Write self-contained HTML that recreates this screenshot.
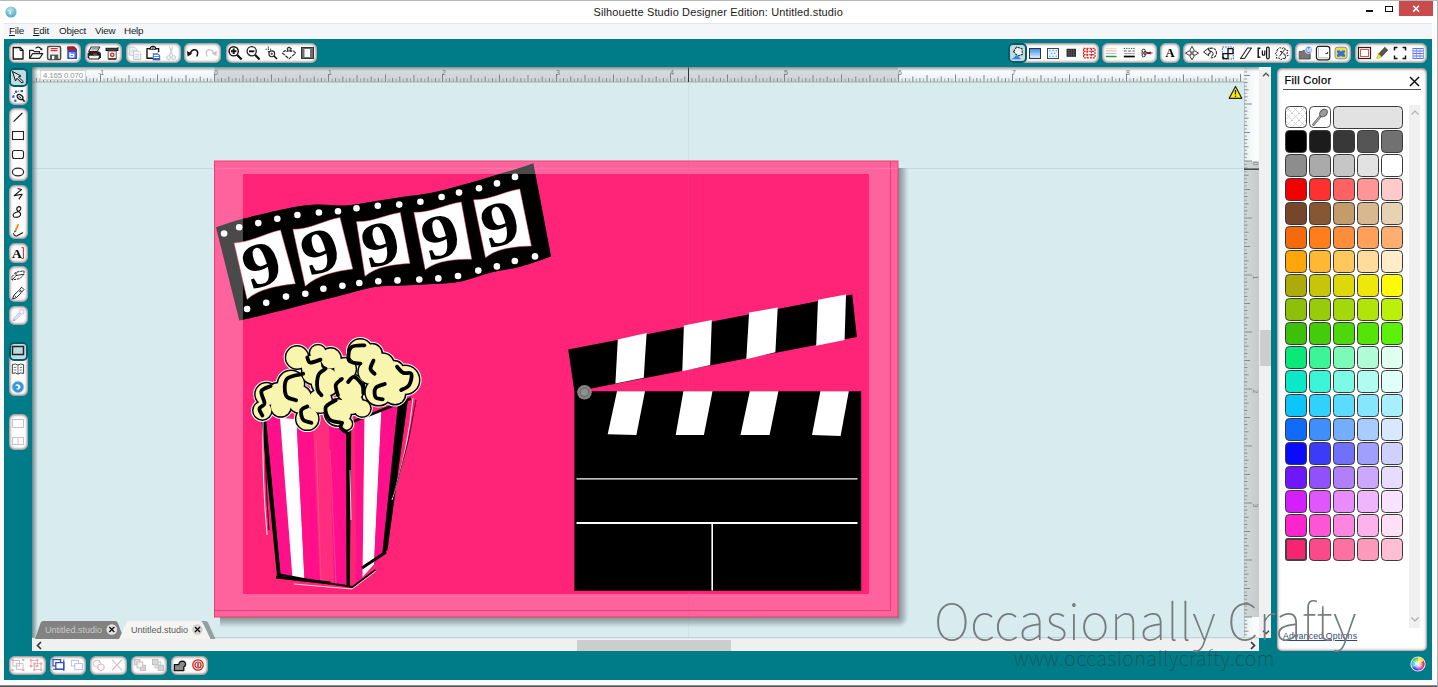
<!DOCTYPE html>
<html lang="en"><head><meta charset="utf-8"><title>Silhouette Studio Designer Edition: Untitled.studio</title>
<style>
*{box-sizing:border-box;margin:0;padding:0}
html,body{width:1438px;height:687px;overflow:hidden;background:#fbfbfb;font-family:"Liberation Sans",sans-serif}
#win{position:relative;width:1438px;height:687px;background:#fbfbfb;overflow:hidden}
#topline{left:0;top:0;width:1438px;height:1px;background:#b9b9b9;z-index:6}
#win::after{content:"";position:absolute;left:0;right:0;top:685px;height:2px;background:linear-gradient(#a8a8a8,#3a3a3a)}
#win::before{content:"";position:absolute;right:0;top:0;width:1px;height:687px;background:#b0b0b0;z-index:5}
#win>*,#app>*{position:absolute}
#app{position:static !important}
#titlebar{left:0;top:1px;width:1437px;height:22px;background:#fff}
#titlebar>*{position:absolute}
#appicon{left:4px;top:3.500px}
#title{left:593.500px;top:5px;font-size:11px;color:#1a1a1a;white-space:nowrap;letter-spacing:.13px}
#wmin{left:1366px;top:9px;width:7px;height:2px;background:#111}
#wmax{left:1385px;top:5px;width:8px;height:6px;border:1.300px solid #111}
#wclose{left:1399px;top:0px;width:34px;height:15px;background:#c94c4d}
#menubar{left:4px;top:23px;width:1428px;height:16px;background:#f4f6f7;border-top:1px solid #e3e5e6;font-size:9.800px;letter-spacing:-.2px;color:#1a1a1a}
#menubar span{position:absolute;top:1px;margin-left:-4px;white-space:nowrap}
#appbg{left:4px;top:39px;width:1428px;height:641px;background:#007b88}
.grp{background:#fff;border-radius:6px;box-shadow:inset 0 0 2.500px 1.200px rgba(70,45,45,.6)}
.grp svg{position:absolute;overflow:visible}
.sel{position:absolute;border:2px solid #085a67;border-radius:5px;background:#bcdde2}
#canvas{left:32px;top:67px;width:1227px;height:572px;background:#d8ecef;overflow:hidden}
#canvas>*{position:absolute}
#vscroll{left:1259px;top:67px;width:12px;height:571px;background:#f0f0f0}
#vscroll .thumb{position:absolute;left:1px;top:263px;width:11px;height:36px;background:#cdcdcd}
#hscroll{left:32px;top:639px;width:1227px;height:12px;background:#f0f0f0}
#hscroll .thumb{position:absolute;left:545px;top:1px;width:154px;height:11px;background:#cdcdcd}
.ch{position:absolute}
#tabs{left:35px;top:620px;width:200px;height:19px}
#tabs text{font-family:"Liberation Sans",sans-serif}
#wheel{left:1410px;top:656px}
#wm1{left:934px;top:588px;font-family:"Noto Sans CJK SC","DejaVu Sans","Liberation Sans",sans-serif;font-weight:100;font-size:50px;color:#757d7f;white-space:nowrap;line-height:60px;letter-spacing:.3px}
#wm2{left:1014px;top:645px;font-family:"Noto Sans CJK SC","DejaVu Sans","Liberation Sans",sans-serif;font-weight:100;font-size:19.500px;color:#1d4f57;white-space:nowrap;line-height:26px;letter-spacing:.7px}
#panel{left:1277px;top:68px;width:150px;height:583px;background:#fff;border-radius:5px;box-shadow:inset 0 0 2.500px 1px rgba(90,55,55,.55),inset 0 2px 3px -1px rgba(70,70,70,.35)}
#panel>*{position:absolute}
#ptitle{left:7.500px;top:6px;font-size:11px;color:#000;white-space:nowrap;letter-spacing:.35px;-webkit-text-stroke:.25px #000}
#pclose{left:132px;top:8px}
#pline{left:6px;top:21px;width:138px;height:1px;background:#555}
.sw{width:22px;height:23px;border:1px solid #3a3a3a;border-radius:4.500px}
#pscroll{left:132px;top:37px;width:11px;height:523px;background:#f0f0f0}
#advopt{left:6px;top:563px;letter-spacing:.2px;font-size:8.700px;color:#2a4a7a;text-decoration:underline;white-space:nowrap}

</style></head>
<body>
<div id="win">
<div id="topline"></div>
<div id="titlebar">
<svg id="appicon" width="14" height="14" viewBox="0 0 14 14"><defs><radialGradient id="ag" cx="45%" cy="30%" r="75%"><stop offset="0" stop-color="#b4e2ea"/><stop offset="1" stop-color="#48a6c0"/></radialGradient></defs><circle cx="7" cy="7" r="5.600" fill="url(#ag)"/><path d="M2.600 5.200q1.800-.8 3.400.6 1.600 1.600 1.200 3.400-1.400.4-2.400-.6 1.400-.2 1.200-1.400-.6-1.400-3.400-2z" fill="#fff" opacity=".92"/></svg>
<div id="title">Silhouette Studio Designer Edition: Untitled.studio</div>
<div id="wmin"></div><div id="wmax"></div><div id="wclose"><svg width="34" height="15" viewBox="0 0 34 15"><path d="M14.200 4.800l5.800 5.800M20 4.800l-5.800 5.800" stroke="#fff" stroke-width="1.500"/></svg></div>
</div>
<div id="menubar"><span style="left:9px"><u>F</u>ile</span><span style="left:33px"><u>E</u>dit</span><span style="left:59px">Object</span><span style="left:95px">View</span><span style="left:124px">Help</span></div>
<div id="appbg"></div><div id="app">
<div class="grp" style="left:9px;top:43px;width:72px;height:20px"><svg style="left:0px;top:1px" width="18" height="18" viewBox="0 0 18 18"><path d="M4.200 3.500h7l2.800 2.800v8.700h-9.800z" fill="#fff" stroke="#111" stroke-width="1.300" stroke-linejoin="round"/><path d="M11 3.500v3h3" fill="none" stroke="#111" stroke-width="1"/></svg><svg style="left:18px;top:1px" width="18" height="18" viewBox="0 0 18 18"><path d="M2.600 14.300V6.400h3.600l1.200 1.300h5.200v2" fill="none" stroke="#222" stroke-width="1.200" stroke-linejoin="round"/><path d="M2.600 14.300l3-4.600h10.200l-3.300 4.600z" fill="#fff" stroke="#222" stroke-width="1.200" stroke-linejoin="round"/><path d="M8.500 4.300q3-2.600 5.800.6" fill="none" stroke="#222" stroke-width="1.100"/><path d="M15.600 6.300l-2.900-.4 2.400-2z" fill="#222"/></svg><svg style="left:36px;top:1px" width="18" height="18" viewBox="0 0 18 18"><rect x="2.600" y="2.600" width="13" height="13" rx="1.300" fill="#f2f2f2" stroke="#4a4a4a" stroke-width="1.500"/><rect x="5.400" y="3.200" width="7.400" height="5" fill="#fff"/><path d="M5.600 4.600h7M5.600 6.600h7" stroke="#e03030" stroke-width="1.200"/><rect x="5" y="10.600" width="8.200" height="4.600" fill="#555"/><rect x="7" y="11.800" width="2.300" height="3.400" fill="#fff"/></svg><svg style="left:54px;top:1px" width="18" height="18" viewBox="0 0 18 18"><path d="M4.300 2.600h7l2.700 2.700v9.700h-9.700z" fill="#2a48c8"/><path d="M4.300 2.600h7l2.300 2.300h-9.300z" fill="#b01818"/><path d="M4.300 5h9.700v1.200h-9.700z" fill="#c02020"/><rect x="5.600" y="8" width="7" height="5.600" fill="#5a86e8"/><path d="M7 8.600v4.200h3.600v-2.400h-3.600" fill="none" stroke="#fff" stroke-width="1.300"/></svg></div>
<div class="grp" style="left:85px;top:43px;width:37px;height:20px"><svg style="left:0px;top:1px" width="18" height="18" viewBox="0 0 18 18"><path d="M6.200 3h8.600l-2.600 4.600h-8.400z" fill="#fff" stroke="#333" stroke-width="1.100" stroke-linejoin="round"/><path d="M6.800 4.600h6.600M5.900 6h6.600" stroke="#777" stroke-width=".8"/><path d="M2.600 9.600l2-2h9.800l1.600 2v3.600l-2.200 2.400h-9.400l-1.800-2z" fill="#222"/><path d="M3.800 11.700h10.600l-1.400 2.700h-8.400z" fill="#f4f4f4"/><path d="M8 10.200h3.800" stroke="#d02020" stroke-width="1.400"/><path d="M9 11.600l3.400-.4" stroke="#20a040" stroke-width="1.100"/></svg><svg style="left:18px;top:1px" width="18" height="18" viewBox="0 0 18 18"><path d="M2.600 3.800h12.800v3.200h-12.800z" fill="#111"/><path d="M3.600 5.200h10.800" stroke="#777" stroke-width=".8"/><path d="M13.600 3.800l2-1v2z" fill="#2a9a4a"/><path d="M5.200 7h8v8h-8z" fill="#fff" stroke="#555" stroke-width="1"/><circle cx="9.300" cy="10.800" r="1.700" fill="none" stroke="#e02020" stroke-width="1.300"/><path d="M5.200 15h8" stroke="#222" stroke-width="1.400"/></svg></div>
<div class="grp" style="left:126px;top:43px;width:55px;height:20px"><svg style="left:0px;top:1px" width="18" height="18" viewBox="0 0 18 18"><path d="M3.600 3.200h5l2 2v6h-7z" fill="#f4f6fa" stroke="#c3cad8" stroke-width="1"/><path d="M5 6h4M5 8h4" stroke="#cfd5e0" stroke-width=".9"/><path d="M7.600 7h5l2.200 2.200v6.200h-7.200z" fill="#fafbfd" stroke="#bcc4d4" stroke-width="1"/><path d="M9 10.400h4.400M9 12.200h4.400M9 14h4.400" stroke="#c8cfdc" stroke-width=".9"/></svg><svg style="left:18px;top:1px" width="18" height="18" viewBox="0 0 18 18"><path d="M6.200 4.600h-3.200v9.600h6" fill="none" stroke="#111" stroke-width="1.400" stroke-linejoin="round"/><path d="M11.600 4.600h3v3.600" fill="none" stroke="#111" stroke-width="1.400"/><path d="M6 5.200q0-2.800 2.900-2.800t2.900 2.800z" fill="#fff" stroke="#111" stroke-width="1.100"/><circle cx="8.900" cy="4" r=".7" fill="#111"/><path d="M8.800 9.200h5l2.400 2.200v4.400h-7.400z" fill="#3d6cc8"/><path d="M9.800 11.400h4.800M9.800 13.400h5.400" stroke="#fff" stroke-width="1.100"/><path d="M8.800 15.800h7.400" stroke="#274a9a" stroke-width="1"/></svg><svg style="left:36px;top:1px" width="18" height="18" viewBox="0 0 18 18"><path d="M7.400 2.600l3.400 9.400M10.800 2.600l-3.400 9.400" stroke="#c5cad6" stroke-width="1.100" fill="none"/><circle cx="6.600" cy="13.600" r="1.900" fill="none" stroke="#c2c8d6" stroke-width="1.100"/><circle cx="11.600" cy="13.600" r="1.900" fill="none" stroke="#c2c8d6" stroke-width="1.100"/></svg></div>
<div class="grp" style="left:184px;top:43px;width:37px;height:20px"><svg style="left:0px;top:1px" width="18" height="18" viewBox="0 0 18 18"><path d="M6.200 9.400q2-4.800 5.800-3.400 2.800 1.600 1 6" fill="none" stroke="#111" stroke-width="1.500" stroke-linecap="round"/><path d="M3 7l.6 5.400 4.600-2.600z" fill="#111"/></svg><svg style="left:18px;top:1px" width="18" height="18" viewBox="0 0 18 18"><path d="M11.800 9.400q-2-4.800-5.800-3.400-2.800 1.600-1 6" fill="none" stroke="#c9c9c9" stroke-width="1.500" stroke-linecap="round" stroke-dasharray="3 1.200"/><path d="M15 6.600l-.6 5.600-4.600-2.800z" fill="#c6c6c6"/></svg></div>
<div class="grp" style="left:226px;top:43px;width:91px;height:20px"><svg style="left:0px;top:1px" width="18" height="18" viewBox="0 0 18 18"><circle cx="7.700" cy="7.300" r="4.600" fill="#fff" stroke="#111" stroke-width="1.400"/><path d="M5 7.300h5.400M7.700 4.600v5.400" stroke="#111" stroke-width="1.900"/><path d="M11 10.800l4.600 4.800" stroke="#111" stroke-width="2.200"/></svg><svg style="left:18px;top:1px" width="18" height="18" viewBox="0 0 18 18"><circle cx="7.700" cy="7.300" r="4.600" fill="#fff" stroke="#222" stroke-width="1.300"/><path d="M5 7.300h5.400" stroke="#111" stroke-width="1.900"/><path d="M11 10.800l4.600 4.800" stroke="#111" stroke-width="2.200"/></svg><svg style="left:36px;top:1px" width="18" height="18" viewBox="0 0 18 18"><path d="M3.600 5.200h6M6.400 2.600v5.600" stroke="#222" stroke-width="1" stroke-dasharray="1.200 1"/><circle cx="9.800" cy="9.800" r="2.900" fill="#fff" stroke="#222" stroke-width="1.100"/><path d="M8.600 9.800h2.400M9.800 8.600v2.400" stroke="#222" stroke-width=".8"/><path d="M12 12l3 3" stroke="#111" stroke-width="1.600"/></svg><svg style="left:54px;top:1px" width="18" height="18" viewBox="0 0 18 18"><path d="M9 3.200l2.400 1.600-1.200.2.200 1.800h3l2.200 2.300-6.600 5.700-6.600-5.700 2.200-2.300h3l.2-1.800-1.200-.2z" fill="#fff" stroke="#222" stroke-width="1.100" stroke-linejoin="round" stroke-dasharray="3.500 .9"/><path d="M6.400 7.600q2.600-1.600 5.200 0" fill="none" stroke="#222" stroke-width="1"/></svg><svg style="left:72px;top:1px" width="18" height="18" viewBox="0 0 18 18"><rect x="3.500" y="3.500" width="12" height="11" fill="#6f6f6f" stroke="#333" stroke-width="1"/><rect x="6.500" y="5" width="5.500" height="8" fill="#fff"/></svg></div>
<div class="grp" style="left:1008px;top:43px;width:91px;height:20px"><div class="sel" style="left:-0.5px;top:0;width:19px;height:20px"></div><svg style="left:0px;top:1px" width="18" height="18" viewBox="0 0 18 18"><path d="M5.500 6.500l4.500-3.500 4.500 3.500-1.500 5.500h-5z" fill="#e8f2f6" stroke="#222" stroke-width="1" stroke-dasharray="2.500 .8" transform="rotate(-20 9 7)"/><path d="M3 15.200q3-.4 4.600-3.600l3.200.6q.4 2 2.600 3z" fill="#3b82e8"/></svg><svg style="left:18px;top:1px" width="18" height="18" viewBox="0 0 18 18"><defs><linearGradient id="gd" x1="0" x2="0" y1="0" y2="1"><stop offset="0" stop-color="#2f8ff5"/><stop offset="1" stop-color="#eaf4ff"/></linearGradient></defs><rect x="3.500" y="4.500" width="11" height="10" fill="url(#gd)" stroke="#333" stroke-width="1"/></svg><svg style="left:36px;top:1px" width="18" height="18" viewBox="0 0 18 18"><rect x="3.500" y="4.500" width="11" height="10" fill="#eef8ff" stroke="#444" stroke-width="1"/><g fill="#4aa8e8"><circle cx="5.800" cy="6.600" r=".8"/><circle cx="9" cy="6.600" r=".8"/><circle cx="12.200" cy="6.600" r=".8"/><circle cx="7.400" cy="9.400" r=".8"/><circle cx="10.600" cy="9.400" r=".8"/><circle cx="5.800" cy="12.200" r=".8"/><circle cx="9" cy="12.200" r=".8"/><circle cx="12.200" cy="12.200" r=".8"/></g></svg><svg style="left:54px;top:1px" width="18" height="18" viewBox="0 0 18 18"><rect x="4.600" y="4.800" width="9.400" height="8" fill="#222"/><path d="M4.600 6.800h9.400M4.600 8.800h9.400M4.600 10.800h9.400M6.900 4.800v8M9.300 4.800v8M11.700 4.800v8" stroke="#777" stroke-width=".5"/></svg><svg style="left:72px;top:1px" width="18" height="18" viewBox="0 0 18 18"><rect x="3.600" y="4.400" width="11.400" height="9.400" fill="#fff" stroke="#e02020" stroke-width="1.200" stroke-dasharray="2 1"/><path d="M3.600 7.400h11.400M3.600 10.600h11.400M7.200 4.400v9.400M11.400 4.400v9.400" stroke="#e02020" stroke-width="1.300" stroke-dasharray="2 .8"/><rect x="7.800" y="7.800" width="3" height="2.400" fill="#fff"/></svg></div>
<div class="grp" style="left:1102px;top:43px;width:55px;height:20px"><svg style="left:0px;top:1px" width="18" height="18" viewBox="0 0 18 18"><path d="M3.800 4.400h10.800" stroke="#f5d9a0" stroke-width="1"/><path d="M3.800 6.900h10.800" stroke="#f0a8a8" stroke-width="1"/><path d="M3.800 9.400h10.800" stroke="#a8b4f0" stroke-width="1"/><path d="M3.800 12.500h10.800" stroke="#1f9f1f" stroke-width="1.500"/></svg><svg style="left:18px;top:1px" width="18" height="18" viewBox="0 0 18 18"><path d="M3.800 4.400h11" stroke="#333" stroke-width="1" stroke-dasharray="1.200 1.200"/><path d="M3.800 7h11" stroke="#555" stroke-width="1" stroke-dasharray="3 1.400"/><path d="M3.800 9.600h11" stroke="#999" stroke-width="1"/><path d="M3.800 12.500h11" stroke="#000" stroke-width="1.700"/></svg><svg style="left:36px;top:1px" width="18" height="18" viewBox="0 0 18 18"><path d="M2.800 9h13" stroke="#e01010" stroke-width="1.100" stroke-dasharray="2 1.300"/><circle cx="5.600" cy="6.800" r="1.600" fill="none" stroke="#222" stroke-width="1"/><circle cx="5.600" cy="11.200" r="1.600" fill="none" stroke="#222" stroke-width="1"/><path d="M6.800 7.600l6 2.400M6.800 10.400l6-2.400" stroke="#222" stroke-width="1.100"/><circle cx="11.800" cy="9" r="1.100" fill="#a01010"/></svg></div>
<div class="grp" style="left:1160px;top:43px;width:20px;height:20px"><svg style="left:1px;top:1px" width="18" height="18" viewBox="0 0 18 18"><text x="9" y="13" text-anchor="middle" font-family="Liberation Serif,serif" font-weight="bold" font-size="12.500" fill="#000">A</text></svg></div>
<div class="grp" style="left:1183px;top:43px;width:109px;height:20px"><svg style="left:0px;top:1px" width="18" height="18" viewBox="0 0 18 18"><g fill="#fff" stroke="#222" stroke-width=".9" stroke-linejoin="round"><path d="M9 2.400l2.200 3.800-2.200 2.400-2.200-2.400z"/><path d="M9 15.800l-2.200-3.800 2.200-2.400 2.200 2.400z"/><path d="M2.400 9.100l3.800-2.200 2.400 2.200-2.400 2.200z"/><path d="M15.600 9.100l-3.800 2.200-2.400-2.200 2.400-2.200z"/></g></svg><svg style="left:18px;top:1px" width="18" height="18" viewBox="0 0 18 18"><path d="M8.600 4.400q6-1.400 6.800 4 .2 5.400-5.600 5.600" fill="none" stroke="#222" stroke-width="1.100" stroke-dasharray="3 .9"/><path d="M8.200 7.400q3.600-.8 4 2.200 0 2.400-2.200 2.800" fill="none" stroke="#222" stroke-width="1"/><path d="M2.600 8l5-4v2.400l1.400-.2v3.400h-1.400v2.200z" fill="#fff" stroke="#222" stroke-width="1" stroke-linejoin="round"/></svg><svg style="left:36px;top:1px" width="18" height="18" viewBox="0 0 18 18"><rect x="3.400" y="3" width="11" height="12" fill="#eef2fb" stroke="#4060c0" stroke-width="1" stroke-dasharray="1.600 1.100"/><path d="M4 14.600v-5h5v-5h5" fill="none" stroke="#111" stroke-width="1.300"/><path d="M9 9.600v5h-5" fill="none" stroke="#111" stroke-width="1.300"/><path d="M9 9.600h5v-5" fill="none" stroke="#111" stroke-width="1.300"/><path d="M3.400 12.600l2.400 1.200-2.400 1.200z" fill="#111"/></svg><svg style="left:54px;top:1px" width="18" height="18" viewBox="0 0 18 18"><path d="M3.500 14.500l7-10.500h4l-7 10.500z" fill="#fff" stroke="#222" stroke-width="1.100" stroke-linejoin="round"/></svg><svg style="left:72px;top:1px" width="18" height="18" viewBox="0 0 18 18"><path d="M5.400 4.200h-2.200v9h2.200" fill="none" stroke="#111" stroke-width="1.400"/><path d="M7.400 6.400v4.400q1.300.8 2.400 0v-4.400" fill="none" stroke="#111" stroke-width="1.200"/><rect x="11.600" y="3.200" width="2.600" height="11.600" rx="1.200" fill="#fff" stroke="#111" stroke-width="1.200"/></svg><svg style="left:90px;top:1px" width="18" height="18" viewBox="0 0 18 18"><path d="M4 6l3-2.600 1.600 1.400 2.600-1.400 1.400 2.600 2.400.6-1 2.600 1.200 2.200-2.800 1 .2 2.400-3-.6-1.600 1.800-1.800-2-2.800.2.600-2.800-2-1.600 2.200-1.800z" fill="#fff" stroke="#222" stroke-width="1" stroke-dasharray="2.200 1"/><path d="M6.400 12.400l5.400-7M7 7.400q2.400-.6 2 1.800M10 9.800q2.600-.4 2.200 2.200" fill="none" stroke="#222" stroke-width="1"/></svg></div>
<div class="grp" style="left:1295px;top:43px;width:56px;height:20px"><svg style="left:1px;top:1px" width="18" height="18" viewBox="0 0 18 18"><path d="M3.200 7.600h2.800l1-1.200h4.200v1.200h3v7.400h-11z" fill="#777" stroke="#444" stroke-width=".8"/><circle cx="12.600" cy="6" r="3.500" fill="#3f7be0" stroke="#dfe8fa" stroke-width=".9"/><text x="12.600" y="8.200" text-anchor="middle" font-family="Liberation Sans,sans-serif" font-weight="bold" font-size="5.800" fill="#fff">M</text></svg><svg style="left:19px;top:1px" width="18" height="18" viewBox="0 0 18 18"><rect x="2.400" y="2.400" width="13.400" height="13.400" rx="2.600" fill="#fff" stroke="#222" stroke-width="1.200"/><path d="M4.400 4v9.800h9.600" fill="none" stroke="#b8b8b8" stroke-width="1"/><path d="M11.400 9.600h2.200v-1.600" fill="none" stroke="#333" stroke-width="1"/></svg><svg style="left:37px;top:1px" width="18" height="18" viewBox="0 0 18 18"><rect x="3" y="3.200" width="12" height="11.600" rx="2.400" fill="#f4de3c" stroke="#7a8fb8" stroke-width="1"/><path d="M5 6.400h3l1 1.400 1-1.400h3v2.200l-1.200 1 1.200 1v2.200h-3l-1-1.200-1 1.200h-3v-2.200l1.200-1-1.200-1z" fill="#2f72e0"/></svg></div>
<div class="grp" style="left:1355px;top:43px;width:72px;height:20px"><svg style="left:0px;top:1px" width="18" height="18" viewBox="0 0 18 18"><rect x="3.500" y="3.500" width="12" height="11" fill="#fff" stroke="#222" stroke-width="1.200"/><rect x="5.500" y="5.500" width="8" height="7" fill="none" stroke="#e85050" stroke-width="1"/></svg><svg style="left:18px;top:1px" width="18" height="18" viewBox="0 0 18 18"><path d="M5.600 10l6.200-6.800 3 2.800-6.200 6.800z" fill="#555" stroke="#333" stroke-width=".6"/><path d="M5.600 10l3 2.800-3.400 1.800-1.600-.2z" fill="#f0ea20" stroke="#a8a010" stroke-width=".5"/></svg><svg style="left:36px;top:1px" width="18" height="18" viewBox="0 0 18 18"><path d="M3.500 6.500v-3h3M11.500 3.500h3v3M14.500 11.500v3h-3M6.500 14.500h-3v-3" fill="none" stroke="#111" stroke-width="1.500"/></svg><svg style="left:54px;top:1px" width="18" height="18" viewBox="0 0 18 18"><rect x="3.500" y="4.500" width="11" height="10" fill="#f2f5ff"/><path d="M3.500 4.500h11M3.500 7h11M3.500 9.500h11M3.500 12h11M3.500 14.500h11" stroke="#4666e0" stroke-width=".9"/><path d="M4 4.500v10M7.500 4.500v10M11 4.500v10M14.500 4.500v10" stroke="#7a92ee" stroke-width=".8"/></svg></div>
<div class="grp" style="left:9px;top:68px;width:19px;height:37px"><div class="sel" style="left:0;top:0px;width:19px;height:19px"></div><svg style="left:0px;top:0px" width="18" height="18" viewBox="0 0 18 18"><path d="M3.500 3.500L12 8l-2.600 1.100 5 4.600-1.300 1.400-5.200-4.800-1.400 2.600z" fill="#d6eaee" stroke="#111" stroke-width="1" stroke-linejoin="round"/></svg><svg style="left:0px;top:19px" width="18" height="18" viewBox="0 0 18 18"><path d="M4.500 9.500q1-6 8-5.500" fill="none" stroke="#333" stroke-width=".8" stroke-dasharray="1.400 1"/><g fill="#2a55e8"><rect x="3.200" y="8.600" width="2.200" height="2.200"/><rect x="6" y="3.600" width="2.200" height="2.200"/><rect x="11.800" y="3" width="2.200" height="2.200"/><rect x="5.200" y="12.600" width="2.200" height="2.200"/></g><ellipse cx="11" cy="10" rx="3.200" ry="2.200" transform="rotate(35 11 10)" fill="#fff" stroke="#111" stroke-width="1.200"/><path d="M13.200 12l2.400 2.600" stroke="#111" stroke-width="1.500"/><path d="M9.600 9l2.600 2" stroke="#111" stroke-width=".9"/></svg></div>
<div class="grp" style="left:9px;top:108px;width:19px;height:73px"><svg style="left:0px;top:0px" width="18" height="18" viewBox="0 0 18 18"><path d="M4.600 13.600l8.800-8.800" stroke="#111" stroke-width="1.200"/></svg><svg style="left:0px;top:18px" width="18" height="18" viewBox="0 0 18 18"><rect x="3.500" y="5.500" width="11" height="8" fill="#fff" stroke="#222" stroke-width="1.100"/></svg><svg style="left:0px;top:37px" width="18" height="18" viewBox="0 0 18 18"><rect x="3.500" y="5.500" width="11" height="8" rx="2" fill="#fff" stroke="#222" stroke-width="1.100"/></svg><svg style="left:0px;top:55px" width="18" height="18" viewBox="0 0 18 18"><ellipse cx="9" cy="9" rx="5.600" ry="3.800" fill="#fff" stroke="#222" stroke-width="1.200"/></svg></div>
<div class="grp" style="left:9px;top:185px;width:19px;height:54px"><svg style="left:0px;top:0px" width="18" height="18" viewBox="0 0 18 18"><path d="M8.600 3.400l3.800 1.200-7.200 6 8 -1.400-3.400 5.200" fill="none" stroke="#111" stroke-width="1.100" stroke-linejoin="round"/></svg><svg style="left:0px;top:18px" width="18" height="18" viewBox="0 0 18 18"><path d="M5 14q-2.400-2.600 1.800-4.400 5.600-2 5-4.800-1.600-2.400-3.800 0-1 2.200 1.800 4 3.400 2.400.6 4.600-2.400 1.200-5.400.6z" fill="none" stroke="#111" stroke-width="1.100"/></svg><svg style="left:0px;top:36px" width="18" height="18" viewBox="0 0 18 18"><path d="M5.400 9.800l3.200-7 1.600.6-3 7z" fill="#f08a10"/><path d="M5.400 9.800l1.800.6-1.800 1.400z" fill="#222"/><path d="M4.400 12.600q1.200 3 3.800 2.200 2.600-1.400 5.400-3" fill="none" stroke="#111" stroke-width="1.100" stroke-linecap="round"/></svg></div>
<div class="grp" style="left:9px;top:243px;width:19px;height:20px"><svg style="left:0px;top:1px" width="18" height="18" viewBox="0 0 18 18"><text x="7.800" y="14" text-anchor="middle" font-family="Liberation Serif,serif" font-weight="bold" font-size="13.500" fill="#000">A</text><path d="M12.600 3.600h1.800v11h-1.800" fill="none" stroke="#e02020" stroke-width="1"/></svg></div>
<div class="grp" style="left:9px;top:266px;width:19px;height:36px"><svg style="left:0px;top:0px" width="18" height="18" viewBox="0 0 18 18"><path d="M3 10.600l4-4.400 8-1.400 0 3.400-4 4.400-8 1.400z" fill="#fff" stroke="#222" stroke-width="1" stroke-linejoin="round" stroke-dasharray="2.600 .8"/><path d="M7 6.200v3.400l-4 4.400M7 9.600l8-1.400" fill="none" stroke="#222" stroke-width=".9"/></svg><svg style="left:0px;top:18px" width="18" height="18" viewBox="0 0 18 18"><path d="M3.600 15l1.200-3.600 5-5 2.400 2.400-5 5z" fill="#fff" stroke="#222" stroke-width="1" stroke-linejoin="round"/><path d="M10.600 5.600l2-2.400 2.400 2.400-2 2.200z" fill="#fff" stroke="#222" stroke-width="1" stroke-linejoin="round"/><path d="M5.400 11.400l2 2" stroke="#222" stroke-width=".8"/></svg></div>
<div class="grp" style="left:9px;top:306px;width:19px;height:19px"><svg style="left:0px;top:0px" width="18" height="18" viewBox="0 0 18 18"><path d="M4 14.600l1-2.600 5.400-5.400 1.800 1.800-5.400 5.400z" fill="#e4e0f6" stroke="#c0bce0" stroke-width=".9"/><circle cx="12.600" cy="5.800" r="2.400" fill="#f2f0fa" stroke="#c8c6e0" stroke-width="1"/><path d="M4 14.600l2-.6" stroke="#a8a0e0" stroke-width="1.200"/></svg></div>
<div class="grp" style="left:9px;top:342px;width:19px;height:54px"><div class="sel" style="left:0;top:0px;width:19px;height:19px"></div><svg style="left:0px;top:0px" width="18" height="18" viewBox="0 0 18 18"><rect x="3.500" y="4.500" width="11" height="8" fill="#bcd8e0" stroke="#222" stroke-width="1.500"/></svg><svg style="left:0px;top:18px" width="18" height="18" viewBox="0 0 18 18"><path d="M3.400 4.600q3-1.400 5.600.4 2.600-1.800 5.600-.4v8.800q-3-1.200-5.600.6-2.600-1.800-5.600-.6z" fill="#fff" stroke="#444" stroke-width="1"/><path d="M9 5v9.400M4.800 7.400h2.600M4.800 10h2.600M10.800 7.400h2.400M10.800 10h2.400" stroke="#555" stroke-width=".8" fill="none"/></svg><svg style="left:0px;top:36px" width="18" height="18" viewBox="0 0 18 18"><circle cx="9" cy="9" r="5.800" fill="#3a98d8" stroke="#9fd0ee" stroke-width=".8" stroke-dasharray="1.500 1"/><path d="M6 7.400q2.600-2.200 5 .2 1.400 2.200-1 3.600-2 .6-3.400-.4 2.400.2 2.800-1.400-.2-1.600-1.800-1.600z" fill="#fff"/></svg></div>
<div class="grp" style="left:9px;top:414px;width:19px;height:36px"><svg style="left:0px;top:0px" width="18" height="18" viewBox="0 0 18 18"><rect x="3.500" y="5.500" width="11" height="8" fill="#fff" stroke="#c4c4c4" stroke-width="1"/></svg><svg style="left:0px;top:18px" width="18" height="18" viewBox="0 0 18 18"><rect x="3.500" y="5.500" width="11" height="7" fill="#fff" stroke="#c4c4c4" stroke-width="1"/><path d="M9 5.500v7" stroke="#c4c4c4" stroke-width="1"/></svg></div>
<div class="grp" style="left:9px;top:656px;width:37px;height:19px"><svg style="left:0px;top:0px" width="18" height="18" viewBox="0 0 18 18"><rect x="4" y="4.400" width="6.400" height="5.600" fill="none" stroke="#c8c0c0" stroke-width="1"/><rect x="7.400" y="7.600" width="6.600" height="5.800" fill="none" stroke="#c8c0c0" stroke-width="1"/><g fill="#f4a0a0"><rect x="2.600" y="3" width="2" height="2"/><rect x="13.200" y="3" width="2" height="2"/><rect x="2.600" y="13" width="2" height="2"/><rect x="13.200" y="13" width="2" height="2"/></g></svg><svg style="left:18px;top:0px" width="18" height="18" viewBox="0 0 18 18"><rect x="4" y="4.400" width="6.400" height="5.600" fill="none" stroke="#d8b8b8" stroke-width="1"/><rect x="7.400" y="7.600" width="6.600" height="5.800" fill="none" stroke="#d8b8b8" stroke-width="1"/><g fill="#f49a9a"><rect x="2.800" y="3.200" width="2" height="2"/><rect x="9.400" y="3.200" width="2" height="2"/><rect x="2.800" y="9.200" width="2" height="2"/><rect x="9.400" y="9.200" width="2" height="2"/><rect x="6.400" y="6.600" width="2" height="2"/><rect x="13.200" y="6.600" width="2" height="2"/><rect x="6.400" y="12.800" width="2" height="2"/><rect x="13.200" y="12.800" width="2" height="2"/></g></svg></div>
<div class="grp" style="left:50px;top:656px;width:36px;height:19px"><svg style="left:0px;top:0px" width="18" height="18" viewBox="0 0 18 18"><rect x="3" y="3.600" width="7.600" height="6.400" fill="#fff" stroke="#3050b8" stroke-width="1.200"/><rect x="5.800" y="6.600" width="8" height="6.600" fill="#fff" stroke="#3050b8" stroke-width="1.300"/><path d="M3 13.200h11M13.800 3.600v11.400" stroke="#3050b8" stroke-width="1.100" fill="none"/></svg><svg style="left:18px;top:0px" width="18" height="18" viewBox="0 0 18 18"><rect x="3.400" y="4.400" width="7.200" height="5.600" fill="#fff" stroke="#b4c4ec" stroke-width="1"/><rect x="6.800" y="7.600" width="7.600" height="6" fill="#fff" stroke="#b8bce8" stroke-width="1"/></svg></div>
<div class="grp" style="left:90px;top:656px;width:37px;height:19px"><svg style="left:0px;top:0px" width="18" height="18" viewBox="0 0 18 18"><circle cx="7" cy="7.600" r="3.600" fill="none" stroke="#c8c8c8" stroke-width="1"/><path d="M8 9.400l3-1.600 3 1.600v3.600l-3 1.800-3-1.800z" fill="#fff" stroke="#f0a4ac" stroke-width="1"/><path d="M8.600 4.400l1.600 1.400-1.800.6" fill="none" stroke="#c0c0c0" stroke-width=".9"/></svg><svg style="left:18px;top:0px" width="18" height="18" viewBox="0 0 18 18"><path d="M4 3.600l10 10.800" stroke="#c8c8c8" stroke-width="1.100"/><path d="M14 3.600l-10 10.800" stroke="#e8b0b0" stroke-width="1.100"/></svg></div>
<div class="grp" style="left:131px;top:656px;width:36px;height:19px"><svg style="left:0px;top:0px" width="18" height="18" viewBox="0 0 18 18"><rect x="3.400" y="3.400" width="5.600" height="5.400" fill="#ddd" stroke="#bbb" stroke-width=".8"/><rect x="9.200" y="9.200" width="5.400" height="5.400" fill="#d4d4d4" stroke="#bbb" stroke-width=".8"/><rect x="6" y="6" width="5.800" height="5.800" fill="#f2f5e4" stroke="#bdbdbd" stroke-width=".9"/></svg><svg style="left:18px;top:0px" width="18" height="18" viewBox="0 0 18 18"><rect x="6" y="6" width="5.800" height="5.800" fill="#eee" stroke="#c4c4c4" stroke-width=".9"/><rect x="3.400" y="3.400" width="5.600" height="5.400" fill="#d8d8d8" stroke="#b8b8b8" stroke-width=".8"/><rect x="9.200" y="9.200" width="5.400" height="5.400" fill="#d4d4d4" stroke="#b8b8b8" stroke-width=".8"/></svg></div>
<div class="grp" style="left:171px;top:656px;width:37px;height:19px"><svg style="left:0px;top:0px" width="18" height="18" viewBox="0 0 18 18"><path d="M3.400 14.600v-6h4.400q.4-3.400 3.600-3.400 3.400.2 3.200 3.400-.2 1.600-1.800 2.200v3.800z" fill="#8a8a8a" stroke="#111" stroke-width="1.300" stroke-linejoin="round"/></svg><svg style="left:18px;top:0px" width="18" height="18" viewBox="0 0 18 18"><circle cx="9" cy="9" r="5.200" fill="#fff" stroke="#e01818" stroke-width="1.300"/><circle cx="9" cy="9" r="3" fill="#eee" stroke="#e01818" stroke-width="1.200"/><path d="M9 7v4" stroke="#333" stroke-width="1.200"/><path d="M14.200 7.200v3.600" stroke="#40c040" stroke-width=".9"/></svg></div>
<div id="canvas">
<svg id="design" style="left:0;top:0" width="1227" height="571" viewBox="32 67 1227 571">
<defs>
<linearGradient id="shr" x1="0" x2="1" y1="0" y2="0"><stop offset="0" stop-color="#77878a" stop-opacity=".95"/><stop offset=".55" stop-color="#93a4a7" stop-opacity=".6"/><stop offset="1" stop-color="#a9babd" stop-opacity="0"/></linearGradient>
<linearGradient id="shb" x1="0" x2="0" y1="0" y2="1"><stop offset="0" stop-color="#77878a" stop-opacity=".95"/><stop offset=".55" stop-color="#93a4a7" stop-opacity=".6"/><stop offset="1" stop-color="#a9babd" stop-opacity="0"/></linearGradient>
<radialGradient id="shc" cx="0" cy="0" r="1"><stop offset="0" stop-color="#77878a" stop-opacity=".95"/><stop offset=".55" stop-color="#93a4a7" stop-opacity=".6"/><stop offset="1" stop-color="#a9babd" stop-opacity="0"/></radialGradient>
<clipPath id="inclip"><rect x="243" y="174" width="626" height="420"/></clipPath>
</defs>
<path d="M32 168.500H1244" stroke="#c6d9dc" stroke-width="1"/>
<path d="M688.500 82V638" stroke="#cfe2e5" stroke-width="1"/>
<rect x="898" y="168" width="11" height="449" fill="url(#shr)"/>
<rect x="220" y="617" width="678" height="11" fill="url(#shb)"/>
<rect x="898" y="617" width="11" height="11" fill="url(#shc)"/>
<rect x="214.500" y="161" width="683.500" height="456" fill="#ff639e" stroke="#ee3f6c" stroke-width="1"/>
<path d="M215 610.500H890.500V161" fill="none" stroke="#ef3b72" stroke-width="1"/>
<rect x="243" y="174" width="626" height="420" fill="#ff2478"/>
<path d="M215 168.500H898" stroke="#f77fae" stroke-width="1" opacity=".7"/>
<path d="M688.500 161V617" stroke="#f0558c" stroke-width="1" opacity=".2"/>
<path d="M216.0 227.4C220.6 225.9 231.8 221.8 243.7 218.6C255.6 215.4 275.3 210.7 287.4 208.4C299.5 206.1 306.8 205.1 316.5 204.6C326.2 204.1 335.9 206.1 345.6 205.5C355.3 204.9 365.0 202.6 374.7 201.2C384.4 199.8 394.1 198.3 403.8 196.8C413.5 195.3 423.3 194.4 433.0 192.4C442.7 190.4 452.3 187.8 462.0 185.1C471.7 182.4 481.5 179.3 491.2 176.4C500.9 173.5 513.3 169.9 520.3 167.7C527.3 165.5 531.2 164.0 533.4 163.3L551.0 256.5C545.9 258.2 530.3 264.0 520.3 266.7C510.3 269.4 500.9 270.1 491.2 272.5C481.5 274.9 471.7 279.3 462.0 281.2C452.3 283.1 442.7 283.4 433.0 284.1C423.3 284.8 413.5 285.1 403.8 285.6C394.1 286.1 384.4 285.6 374.7 287.0C365.0 288.4 355.3 291.9 345.6 294.3C335.9 296.7 326.2 299.2 316.5 301.6C306.8 304.0 297.1 306.5 287.4 308.9C277.7 311.3 266.2 314.3 258.2 316.2C250.2 318.1 242.5 319.8 239.3 320.5Z" fill="#4a4a4a"/>
<g clip-path="url(#inclip)"><path d="M216.0 227.4C220.6 225.9 231.8 221.8 243.7 218.6C255.6 215.4 275.3 210.7 287.4 208.4C299.5 206.1 306.8 205.1 316.5 204.6C326.2 204.1 335.9 206.1 345.6 205.5C355.3 204.9 365.0 202.6 374.7 201.2C384.4 199.8 394.1 198.3 403.8 196.8C413.5 195.3 423.3 194.4 433.0 192.4C442.7 190.4 452.3 187.8 462.0 185.1C471.7 182.4 481.5 179.3 491.2 176.4C500.9 173.5 513.3 169.9 520.3 167.7C527.3 165.5 531.2 164.0 533.4 163.3L551.0 256.5C545.9 258.2 530.3 264.0 520.3 266.7C510.3 269.4 500.9 270.1 491.2 272.5C481.5 274.9 471.7 279.3 462.0 281.2C452.3 283.1 442.7 283.4 433.0 284.1C423.3 284.8 413.5 285.1 403.8 285.6C394.1 286.1 384.4 285.6 374.7 287.0C365.0 288.4 355.3 291.9 345.6 294.3C335.9 296.7 326.2 299.2 316.5 301.6C306.8 304.0 297.1 306.5 287.4 308.9C277.7 311.3 266.2 314.3 258.2 316.2C250.2 318.1 242.5 319.8 239.3 320.5Z" fill="#000"/></g>
<path d="M234.0 242.9C250.4 242.5 264.9 233.3 280.5 230.0L295.4 283.8C278.5 285.6 258.9 288.8 247.1 299.4Z" fill="#fff" stroke="#f04a6a" stroke-width=".5"/>
<text transform="translate(263.2 270.0) rotate(-17.5) scale(1.18 1)" x="0" y="15.500" text-anchor="middle" font-family="Liberation Serif,serif" font-weight="bold" font-size="63" fill="#000">9</text>
<path d="M292.9 229.3C309.4 229.3 324.2 220.4 340.0 217.4L352.8 268.9C336.3 271.2 317.0 275.1 305.3 286.2Z" fill="#fff" stroke="#f04a6a" stroke-width=".5"/>
<text transform="translate(321.8 256.4) rotate(-16.2) scale(1.18 1)" x="0" y="15.500" text-anchor="middle" font-family="Liberation Serif,serif" font-weight="bold" font-size="63" fill="#000">9</text>
<path d="M356.5 221.5C371.8 222.4 385.6 214.5 400.3 212.5L410.0 263.5C394.4 264.3 376.3 266.3 365.0 276.3Z" fill="#fff" stroke="#f04a6a" stroke-width=".5"/>
<text transform="translate(381.9 249.4) rotate(-13.6) scale(1.18 1)" x="0" y="15.500" text-anchor="middle" font-family="Liberation Serif,serif" font-weight="bold" font-size="63" fill="#000">9</text>
<path d="M413.9 212.3C430.4 212.8 445.4 204.4 461.3 202.0L471.7 259.2C455.6 259.2 436.8 260.4 425.2 269.7Z" fill="#fff" stroke="#f04a6a" stroke-width=".5"/>
<text transform="translate(442.0 241.8) rotate(-14.3) scale(1.18 1)" x="0" y="15.500" text-anchor="middle" font-family="Liberation Serif,serif" font-weight="bold" font-size="63" fill="#000">9</text>
<path d="M473.5 199.8C489.7 200.1 504.3 191.5 519.8 188.9L531.4 246.1C515.5 246.5 496.9 248.1 485.5 257.7Z" fill="#fff" stroke="#f04a6a" stroke-width=".5"/>
<text transform="translate(501.5 229.1) rotate(-15.2) scale(1.18 1)" x="0" y="15.500" text-anchor="middle" font-family="Liberation Serif,serif" font-weight="bold" font-size="63" fill="#000">9</text>
<circle cx="224.1" cy="233.5" r="3.300" fill="#fff"/>
<circle cx="239.2" cy="227.3" r="3.300" fill="#fff"/>
<circle cx="258.3" cy="223.1" r="3.300" fill="#fff"/>
<circle cx="277.3" cy="218.7" r="3.300" fill="#fff"/>
<circle cx="297.4" cy="215.0" r="3.300" fill="#fff"/>
<circle cx="318.9" cy="212.5" r="3.300" fill="#fff"/>
<circle cx="338.0" cy="211.2" r="3.300" fill="#fff"/>
<circle cx="356.5" cy="208.3" r="3.300" fill="#fff"/>
<circle cx="377.8" cy="205.8" r="3.300" fill="#fff"/>
<circle cx="399.2" cy="204.6" r="3.300" fill="#fff"/>
<circle cx="420.4" cy="201.8" r="3.300" fill="#fff"/>
<circle cx="441.6" cy="197.0" r="3.300" fill="#fff"/>
<circle cx="459.0" cy="192.6" r="3.300" fill="#fff"/>
<circle cx="479.0" cy="188.2" r="3.300" fill="#fff"/>
<circle cx="497.0" cy="183.4" r="3.300" fill="#fff"/>
<circle cx="515.0" cy="176.9" r="3.300" fill="#fff"/>
<circle cx="247.1" cy="309.0" r="3.300" fill="#fff"/>
<circle cx="266.2" cy="302.8" r="3.300" fill="#fff"/>
<circle cx="286.0" cy="296.6" r="3.300" fill="#fff"/>
<circle cx="305.3" cy="293.7" r="3.300" fill="#fff"/>
<circle cx="323.4" cy="288.7" r="3.300" fill="#fff"/>
<circle cx="342.4" cy="285.7" r="3.300" fill="#fff"/>
<circle cx="359.3" cy="283.0" r="3.300" fill="#fff"/>
<circle cx="378.3" cy="281.3" r="3.300" fill="#fff"/>
<circle cx="397.5" cy="280.4" r="3.300" fill="#fff"/>
<circle cx="419.3" cy="279.5" r="3.300" fill="#fff"/>
<circle cx="438.3" cy="278.4" r="3.300" fill="#fff"/>
<circle cx="458.0" cy="276.0" r="3.300" fill="#fff"/>
<circle cx="478.3" cy="270.6" r="3.300" fill="#fff"/>
<circle cx="496.9" cy="266.4" r="3.300" fill="#fff"/>
<circle cx="514.8" cy="261.0" r="3.300" fill="#fff"/>
<circle cx="535.0" cy="256.4" r="3.300" fill="#fff"/>
<path d="M261.0 416.0L266.0 416.5L281.0 576.1L277.0 575.4Z" fill="#000"/>
<path d="M266.0 416.5L280.0 417.7L292.5 577.9L281.0 576.1Z" fill="#ff0f8a"/>
<path d="M280.0 417.7L296.5 419.2L304.5 579.9L292.5 577.9Z" fill="#fff"/>
<path d="M296.5 419.2L313.0 420.7L320.0 582.4L304.5 579.9Z" fill="#ff0f8a"/>
<path d="M313.0 420.7L329.0 422.2L334.0 584.6L320.0 582.4Z" fill="#ff2d7d"/>
<path d="M329.0 422.2L346.0 423.7L346.5 586.6L334.0 584.6Z" fill="#ff0f8a"/>
<path d="M346.0 423.7L351.5 424.2L350.0 587.2L346.5 586.6Z" fill="#000"/>
<path d="M351.5 421.3L355.0 419.9L356.5 583.3L350.0 590.3Z" fill="#ff2478"/>
<path d="M355.0 419.9L364.5 416.2L362.5 576.9L356.5 583.3Z" fill="#ff0f8a"/>
<path d="M364.5 416.2L381.5 409.6L374.0 564.6L362.5 576.9Z" fill="#fff"/>
<path d="M381.5 409.6L398.0 403.1L382.0 556.0L374.0 564.6Z" fill="#ff0f8a"/>
<path d="M398.0 403.1L408.0 399.2L387.5 550.1L382.0 556.0Z" fill="#000"/>
<path d="M277 574L312 580.500L352.500 587L375.500 570" fill="none" stroke="#000" stroke-width="2"/>
<path d="M276 577L330 583" fill="none" stroke="#000" stroke-width="3"/>
<path d="M362 568L386 552" fill="none" stroke="#000" stroke-width="3"/>
<path d="M294 584L352 589L376 571" fill="none" stroke="#fff" stroke-width=".8"/>
<path d="M263 420Q262 480 267 535" fill="none" stroke="#fff" stroke-width=".9"/>
<path d="M265.500 425Q265 480 269 530" fill="none" stroke="#000" stroke-width=".8"/>
<path d="M413 398Q408 450 392 500" fill="none" stroke="#fff" stroke-width=".9"/>
<path d="M416 400Q410 440 398 480L392 498" fill="none" stroke="#000" stroke-width=".7"/>
<path d="M350 470L351 520" fill="none" stroke="#fff" stroke-width=".8"/>
<path d="M316 440L321 580M330 450L336 584" fill="none" stroke="#ff5a9a" stroke-width=".7"/>
<path d="M352 422L411 398.500" fill="none" stroke="#000" stroke-width="2.600"/>
<g fill="#fff" stroke="#fff" stroke-width="5"><circle cx="297.1" cy="357.5" r="10.9"/><circle cx="330.7" cy="358.5" r="9.9"/><circle cx="360.3" cy="351.4" r="11.8"/><circle cx="382.7" cy="364.6" r="10.9"/><circle cx="405.1" cy="379.9" r="13.9"/><circle cx="266.5" cy="394.2" r="10.9"/><circle cx="262.4" cy="410.5" r="8.9"/><circle cx="291.0" cy="384.0" r="12.9"/><circle cx="280.8" cy="406.4" r="9.9"/><circle cx="307.3" cy="418.7" r="10.9"/><circle cx="325.6" cy="382.0" r="13.9"/><circle cx="350.1" cy="388.1" r="13.9"/><circle cx="337.9" cy="412.5" r="12.9"/><circle cx="346.0" cy="423.8" r="5.9"/><circle cx="378.6" cy="392.2" r="12.9"/><circle cx="362.3" cy="408.5" r="8.0"/><circle cx="395.0" cy="394.2" r="9.9"/><circle cx="311.4" cy="365.7" r="9.9"/><circle cx="370.5" cy="371.8" r="11.8"/><circle cx="320.0" cy="401.0" r="11.6"/><circle cx="300.0" cy="401.0" r="11.6"/><circle cx="388.0" cy="381.0" r="11.6"/><circle cx="313.0" cy="373.0" r="10.7"/><circle cx="345.0" cy="369.0" r="10.7"/><circle cx="394.0" cy="371.0" r="9.7"/><circle cx="300.0" cy="397.0" r="10.7"/><circle cx="372.0" cy="354.0" r="9.7"/><circle cx="278.0" cy="393.0" r="9.7"/><circle cx="318.0" cy="353.0" r="7.8"/><circle cx="352.0" cy="403.0" r="10.7"/></g>
<g fill="#000" stroke="#000" stroke-width="3"><circle cx="297.1" cy="357.5" r="10.9"/><circle cx="330.7" cy="358.5" r="9.9"/><circle cx="360.3" cy="351.4" r="11.8"/><circle cx="382.7" cy="364.6" r="10.9"/><circle cx="405.1" cy="379.9" r="13.9"/><circle cx="266.5" cy="394.2" r="10.9"/><circle cx="262.4" cy="410.5" r="8.9"/><circle cx="291.0" cy="384.0" r="12.9"/><circle cx="280.8" cy="406.4" r="9.9"/><circle cx="307.3" cy="418.7" r="10.9"/><circle cx="325.6" cy="382.0" r="13.9"/><circle cx="350.1" cy="388.1" r="13.9"/><circle cx="337.9" cy="412.5" r="12.9"/><circle cx="346.0" cy="423.8" r="5.9"/><circle cx="378.6" cy="392.2" r="12.9"/><circle cx="362.3" cy="408.5" r="8.0"/><circle cx="395.0" cy="394.2" r="9.9"/><circle cx="311.4" cy="365.7" r="9.9"/><circle cx="370.5" cy="371.8" r="11.8"/><circle cx="320.0" cy="401.0" r="11.6"/><circle cx="300.0" cy="401.0" r="11.6"/><circle cx="388.0" cy="381.0" r="11.6"/><circle cx="313.0" cy="373.0" r="10.7"/><circle cx="345.0" cy="369.0" r="10.7"/><circle cx="394.0" cy="371.0" r="9.7"/><circle cx="300.0" cy="397.0" r="10.7"/><circle cx="372.0" cy="354.0" r="9.7"/><circle cx="278.0" cy="393.0" r="9.7"/><circle cx="318.0" cy="353.0" r="7.8"/><circle cx="352.0" cy="403.0" r="10.7"/></g>
<g fill="#f8f5ae"><circle cx="297.1" cy="357.5" r="10.9"/><circle cx="330.7" cy="358.5" r="9.9"/><circle cx="360.3" cy="351.4" r="11.8"/><circle cx="382.7" cy="364.6" r="10.9"/><circle cx="405.1" cy="379.9" r="13.9"/><circle cx="266.5" cy="394.2" r="10.9"/><circle cx="262.4" cy="410.5" r="8.9"/><circle cx="291.0" cy="384.0" r="12.9"/><circle cx="280.8" cy="406.4" r="9.9"/><circle cx="307.3" cy="418.7" r="10.9"/><circle cx="325.6" cy="382.0" r="13.9"/><circle cx="350.1" cy="388.1" r="13.9"/><circle cx="337.9" cy="412.5" r="12.9"/><circle cx="346.0" cy="423.8" r="5.9"/><circle cx="378.6" cy="392.2" r="12.9"/><circle cx="362.3" cy="408.5" r="8.0"/><circle cx="395.0" cy="394.2" r="9.9"/><circle cx="311.4" cy="365.7" r="9.9"/><circle cx="370.5" cy="371.8" r="11.8"/><circle cx="320.0" cy="401.0" r="11.6"/><circle cx="300.0" cy="401.0" r="11.6"/><circle cx="388.0" cy="381.0" r="11.6"/><circle cx="313.0" cy="373.0" r="10.7"/><circle cx="345.0" cy="369.0" r="10.7"/><circle cx="394.0" cy="371.0" r="9.7"/><circle cx="300.0" cy="397.0" r="10.7"/><circle cx="372.0" cy="354.0" r="9.7"/><circle cx="278.0" cy="393.0" r="9.7"/><circle cx="318.0" cy="353.0" r="7.8"/><circle cx="352.0" cy="403.0" r="10.7"/></g>
<path d="M270.6 386.1C269.1 386.9 262.4 388.3 261.4 391.2C260.4 394.1 264.8 400.5 264.5 403.4C264.1 406.3 259.7 406.5 259.4 408.5C259.0 410.5 261.9 414.4 262.4 415.6" fill="none" stroke="#000" stroke-width="3.800" stroke-linecap="round"/>
<path d="M303.2 373.8C300.5 374.7 289.8 375.4 286.9 378.9C284.0 382.5 284.3 391.7 285.9 395.2C287.4 398.8 294.4 399.5 296.1 400.3" fill="none" stroke="#000" stroke-width="3.800" stroke-linecap="round"/>
<path d="M325.6 368.7C324.4 369.8 319.9 371.5 318.5 374.9C317.1 378.3 317.0 385.7 317.5 389.1C318.0 392.5 320.9 394.2 321.5 395.2" fill="none" stroke="#000" stroke-width="3.800" stroke-linecap="round"/>
<path d="M307.3 357.5C307.8 358.4 308.1 362.3 310.3 362.6C312.5 363.0 318.8 360.1 320.5 359.6" fill="none" stroke="#000" stroke-width="3.800" stroke-linecap="round"/>
<path d="M364.4 345.3C362.2 345.6 353.7 344.8 351.1 347.3C348.6 349.9 347.5 357.9 349.1 360.6C350.6 363.3 358.4 363.1 360.3 363.6" fill="none" stroke="#000" stroke-width="3.800" stroke-linecap="round"/>
<path d="M397.0 366.7C398.0 367.7 400.7 371.6 403.1 372.8C405.5 374.0 410.2 371.8 411.3 373.8C412.3 375.9 410.9 382.3 409.2 385.0C407.5 387.8 402.4 389.3 401.1 390.1" fill="none" stroke="#000" stroke-width="3.800" stroke-linecap="round"/>
<path d="M384.8 384.0C383.2 384.7 377.1 385.9 375.6 388.1C374.0 390.3 374.4 395.4 375.6 397.3C376.8 399.1 381.5 399.0 382.7 399.3" fill="none" stroke="#000" stroke-width="3.800" stroke-linecap="round"/>
<path d="M341.9 378.9C340.9 379.9 336.5 382.3 335.8 385.0C335.1 387.8 337.5 393.5 337.9 395.2" fill="none" stroke="#000" stroke-width="3.800" stroke-linecap="round"/>
<path d="M348.1 382.0C349.1 381.1 351.8 376.4 354.2 376.9C356.5 377.4 360.8 382.3 362.3 385.0C363.9 387.8 363.2 391.8 363.3 393.2" fill="none" stroke="#000" stroke-width="3.800" stroke-linecap="round"/>
<path d="M335.8 400.3C334.1 401.5 326.6 404.2 325.6 407.5C324.6 410.7 327.0 417.2 329.7 419.7C332.4 422.3 339.9 422.3 341.9 422.8" fill="none" stroke="#000" stroke-width="3.800" stroke-linecap="round"/>
<path d="M307.3 406.5C306.3 407.1 301.8 408.3 301.2 410.5C300.5 412.7 301.5 417.7 303.2 419.7C304.9 421.7 310.0 422.3 311.4 422.8" fill="none" stroke="#000" stroke-width="3.800" stroke-linecap="round"/>
<path d="M341.9 422.8C341.8 423.6 340.2 426.3 340.9 427.9C341.6 429.4 345.2 431.3 346.0 431.9" fill="none" stroke="#000" stroke-width="3.800" stroke-linecap="round"/>
<path d="M373.5 360.6C373.0 361.9 370.3 366.5 370.5 368.7C370.6 370.9 373.9 373.0 374.6 373.8" fill="none" stroke="#000" stroke-width="3.800" stroke-linecap="round"/>
<path d="M568.2 349.4L852.3 294.4L856.9 337L592.6 388.3L574.4 391.5Z" fill="#000"/>
<rect x="574.400" y="391.300" width="286.800" height="199.500" fill="#000"/>
<path d="M617.8 339.4L646.6 333.1L643.8 377.8L615.4 383.6Z" fill="#fff"/>
<path d="M683.9 325.4L711.8 320.1L710.2 365.0L682.3 371.3Z" fill="#fff"/>
<path d="M749.1 312.6L777.7 307.5L775.4 352.2L746.3 359.2Z" fill="#fff"/>
<path d="M818.0 299.8L846.0 294.4L844.6 340.1L816.2 345.7Z" fill="#fff"/>
<path d="M617.0 391.3L645.0 391.3L636.4 434.9L607.7 434.2Z" fill="#fff"/>
<path d="M683.4 391.3L712.5 391.3L703.9 434.9L675.7 434.9Z" fill="#fff"/>
<path d="M749.8 391.3L778.4 391.3L769.6 434.9L740.5 434.9Z" fill="#fff"/>
<path d="M820.4 391.3L848.8 391.3L840.6 436.0L812.0 434.9Z" fill="#fff"/>
<path d="M576.500 478.800H857.500" stroke="#fff" stroke-width="1.200"/>
<path d="M576.500 523H857.500" stroke="#fff" stroke-width="2"/>
<path d="M712.200 523V590.500" stroke="#fff" stroke-width="1.600"/>
<circle cx="584.500" cy="392.300" r="7.300" fill="#858585"/><circle cx="584.500" cy="392.300" r="4.300" fill="#8f8f8f" stroke="#666" stroke-width="1.100"/>
</svg>
<svg id="rulers" style="left:0;top:0" width="1227" height="571" viewBox="32 67 1227 571">
<defs><linearGradient id="rg" x1="0" x2="0" y1="0" y2="1"><stop offset="0" stop-color="#fdfefe"/><stop offset=".55" stop-color="#f4f7f8"/><stop offset="1" stop-color="#e3eaec"/></linearGradient>
<linearGradient id="rgp" x1="0" x2="0" y1="0" y2="1"><stop offset="0" stop-color="#d9dcdd"/><stop offset="1" stop-color="#cdd3d5"/></linearGradient>
<linearGradient id="vg" x1="0" x2="1" y1="0" y2="0"><stop offset="0" stop-color="#e6ecee"/><stop offset=".5" stop-color="#f6f8f9"/><stop offset="1" stop-color="#fdfdfd"/></linearGradient>
<linearGradient id="vgp" x1="0" x2="1" y1="0" y2="0"><stop offset="0" stop-color="#d2d7d8"/><stop offset="1" stop-color="#c6caca"/></linearGradient>
<linearGradient id="ishl" x1="0" x2="1" y1="0" y2="0"><stop offset="0" stop-color="#46585c" stop-opacity=".7"/><stop offset="1" stop-color="#50686c" stop-opacity="0"/></linearGradient>
<linearGradient id="isht" x1="0" x2="0" y1="0" y2="1"><stop offset="0" stop-color="#4a5a5e" stop-opacity=".6"/><stop offset="1" stop-color="#50686c" stop-opacity="0"/></linearGradient>
</defs>
<rect x="32" y="67" width="1212" height="15" fill="url(#rg)"/>
<rect x="214.500" y="67" width="683.500" height="15" fill="url(#rgp)"/>
<rect x="1244" y="67" width="15" height="571" fill="url(#vg)"/>
<rect x="1244" y="161" width="15" height="456" fill="url(#vgp)"/>
<path d="M1244.500 82V638" stroke="#b9c6c9" stroke-width="1"/>
<path d="M36.4 82v-4.0M43.5 82v-7.5M50.6 82v-4.0M57.8 82v-5.5M64.9 82v-4.0M72.0 82v-7.0M79.1 82v-4.0M86.2 82v-5.5M93.4 82v-4.0M100.5 82v-8.0M107.6 82v-4.0M114.8 82v-5.5M121.9 82v-4.0M129.0 82v-7.0M136.1 82v-4.0M143.2 82v-5.5M150.4 82v-4.0M157.5 82v-7.5M164.6 82v-4.0M171.8 82v-5.5M178.9 82v-4.0M186.0 82v-7.0M193.1 82v-4.0M200.2 82v-5.5M207.4 82v-4.0M214.5 82v-8.0M221.6 82v-4.0M228.8 82v-5.5M235.9 82v-4.0M243.0 82v-7.0M250.1 82v-4.0M257.2 82v-5.5M264.4 82v-4.0M271.5 82v-7.5M278.6 82v-4.0M285.8 82v-5.5M292.9 82v-4.0M300.0 82v-7.0M307.1 82v-4.0M314.2 82v-5.5M321.4 82v-4.0M328.5 82v-8.0M335.6 82v-4.0M342.8 82v-5.5M349.9 82v-4.0M357.0 82v-7.0M364.1 82v-4.0M371.2 82v-5.5M378.4 82v-4.0M385.5 82v-7.5M392.6 82v-4.0M399.8 82v-5.5M406.9 82v-4.0M414.0 82v-7.0M421.1 82v-4.0M428.2 82v-5.5M435.4 82v-4.0M442.5 82v-8.0M449.6 82v-4.0M456.8 82v-5.5M463.9 82v-4.0M471.0 82v-7.0M478.1 82v-4.0M485.2 82v-5.5M492.4 82v-4.0M499.5 82v-7.5M506.6 82v-4.0M513.8 82v-5.5M520.9 82v-4.0M528.0 82v-7.0M535.1 82v-4.0M542.2 82v-5.5M549.4 82v-4.0M556.5 82v-8.0M563.6 82v-4.0M570.8 82v-5.5M577.9 82v-4.0M585.0 82v-7.0M592.1 82v-4.0M599.2 82v-5.5M606.4 82v-4.0M613.5 82v-7.5M620.6 82v-4.0M627.8 82v-5.5M634.9 82v-4.0M642.0 82v-7.0M649.1 82v-4.0M656.2 82v-5.5M663.4 82v-4.0M670.5 82v-8.0M677.6 82v-4.0M684.8 82v-5.5M691.9 82v-4.0M699.0 82v-7.0M706.1 82v-4.0M713.2 82v-5.5M720.4 82v-4.0M727.5 82v-7.5M734.6 82v-4.0M741.8 82v-5.5M748.9 82v-4.0M756.0 82v-7.0M763.1 82v-4.0M770.2 82v-5.5M777.4 82v-4.0M784.5 82v-8.0M791.6 82v-4.0M798.8 82v-5.5M805.9 82v-4.0M813.0 82v-7.0M820.1 82v-4.0M827.2 82v-5.5M834.4 82v-4.0M841.5 82v-7.5M848.6 82v-4.0M855.8 82v-5.5M862.9 82v-4.0M870.0 82v-7.0M877.1 82v-4.0M884.2 82v-5.5M891.4 82v-4.0M898.5 82v-8.0M905.6 82v-4.0M912.8 82v-5.5M919.9 82v-4.0M927.0 82v-7.0M934.1 82v-4.0M941.2 82v-5.5M948.4 82v-4.0M955.5 82v-7.5M962.6 82v-4.0M969.8 82v-5.5M976.9 82v-4.0M984.0 82v-7.0M991.1 82v-4.0M998.2 82v-5.5M1005.4 82v-4.0M1012.5 82v-8.0M1019.6 82v-4.0M1026.8 82v-5.5M1033.9 82v-4.0M1041.0 82v-7.0M1048.1 82v-4.0M1055.2 82v-5.5M1062.4 82v-4.0M1069.5 82v-7.5M1076.6 82v-4.0M1083.8 82v-5.5M1090.9 82v-4.0M1098.0 82v-7.0M1105.1 82v-4.0M1112.2 82v-5.5M1119.4 82v-4.0M1126.5 82v-8.0M1133.6 82v-4.0M1140.8 82v-5.5M1147.9 82v-4.0M1155.0 82v-7.0M1162.1 82v-4.0M1169.2 82v-5.5M1176.4 82v-4.0M1183.5 82v-7.5M1190.6 82v-4.0M1197.8 82v-5.5M1204.9 82v-4.0M1212.0 82v-7.0M1219.1 82v-4.0M1226.2 82v-5.5M1233.4 82v-4.0M1240.5 82v-8.0" stroke="#7b8587" stroke-width="1" fill="none"/>
<path d="M39.9 82v-3.5M47.1 82v-3.5M54.2 82v-3.5M61.3 82v-3.5M68.4 82v-3.5M75.6 82v-3.5M82.7 82v-3.5M89.8 82v-3.5M96.9 82v-3.5M104.1 82v-3.5M111.2 82v-3.5M118.3 82v-3.5M125.4 82v-3.5M132.6 82v-3.5M139.7 82v-3.5M146.8 82v-3.5M153.9 82v-3.5M161.1 82v-3.5M168.2 82v-3.5M175.3 82v-3.5M182.4 82v-3.5M189.6 82v-3.5M196.7 82v-3.5M203.8 82v-3.5M210.9 82v-3.5M218.1 82v-3.5M225.2 82v-3.5M232.3 82v-3.5M239.4 82v-3.5M246.6 82v-3.5M253.7 82v-3.5M260.8 82v-3.5M267.9 82v-3.5M275.1 82v-3.5M282.2 82v-3.5M289.3 82v-3.5M296.4 82v-3.5M303.6 82v-3.5M310.7 82v-3.5M317.8 82v-3.5M324.9 82v-3.5M332.1 82v-3.5M339.2 82v-3.5M346.3 82v-3.5M353.4 82v-3.5M360.6 82v-3.5M367.7 82v-3.5M374.8 82v-3.5M381.9 82v-3.5M389.1 82v-3.5M396.2 82v-3.5M403.3 82v-3.5M410.4 82v-3.5M417.6 82v-3.5M424.7 82v-3.5M431.8 82v-3.5M438.9 82v-3.5M446.1 82v-3.5M453.2 82v-3.5M460.3 82v-3.5M467.4 82v-3.5M474.6 82v-3.5M481.7 82v-3.5M488.8 82v-3.5M495.9 82v-3.5M503.1 82v-3.5M510.2 82v-3.5M517.3 82v-3.5M524.4 82v-3.5M531.6 82v-3.5M538.7 82v-3.5M545.8 82v-3.5M552.9 82v-3.5M560.1 82v-3.5M567.2 82v-3.5M574.3 82v-3.5M581.4 82v-3.5M588.6 82v-3.5M595.7 82v-3.5M602.8 82v-3.5M609.9 82v-3.5M617.1 82v-3.5M624.2 82v-3.5M631.3 82v-3.5M638.4 82v-3.5M645.6 82v-3.5M652.7 82v-3.5M659.8 82v-3.5M666.9 82v-3.5M674.1 82v-3.5M681.2 82v-3.5M688.3 82v-3.5M695.4 82v-3.5M702.6 82v-3.5M709.7 82v-3.5M716.8 82v-3.5M723.9 82v-3.5M731.1 82v-3.5M738.2 82v-3.5M745.3 82v-3.5M752.4 82v-3.5M759.6 82v-3.5M766.7 82v-3.5M773.8 82v-3.5M780.9 82v-3.5M788.1 82v-3.5M795.2 82v-3.5M802.3 82v-3.5M809.4 82v-3.5M816.6 82v-3.5M823.7 82v-3.5M830.8 82v-3.5M837.9 82v-3.5M845.1 82v-3.5M852.2 82v-3.5M859.3 82v-3.5M866.4 82v-3.5M873.6 82v-3.5M880.7 82v-3.5M887.8 82v-3.5M894.9 82v-3.5M902.1 82v-3.5M909.2 82v-3.5M916.3 82v-3.5M923.4 82v-3.5M930.6 82v-3.5M937.7 82v-3.5M944.8 82v-3.5M951.9 82v-3.5M959.1 82v-3.5M966.2 82v-3.5M973.3 82v-3.5M980.4 82v-3.5M987.6 82v-3.5M994.7 82v-3.5M1001.8 82v-3.5M1008.9 82v-3.5M1016.1 82v-3.5M1023.2 82v-3.5M1030.3 82v-3.5M1037.4 82v-3.5M1044.6 82v-3.5M1051.7 82v-3.5M1058.8 82v-3.5M1065.9 82v-3.5M1073.1 82v-3.5M1080.2 82v-3.5M1087.3 82v-3.5M1094.4 82v-3.5M1101.6 82v-3.5M1108.7 82v-3.5M1115.8 82v-3.5M1122.9 82v-3.5M1130.1 82v-3.5M1137.2 82v-3.5M1144.3 82v-3.5M1151.4 82v-3.5M1158.6 82v-3.5M1165.7 82v-3.5M1172.8 82v-3.5M1179.9 82v-3.5M1187.1 82v-3.5M1194.2 82v-3.5M1201.3 82v-3.5M1208.4 82v-3.5M1215.6 82v-3.5M1222.7 82v-3.5M1229.8 82v-3.5M1236.9 82v-3.5" stroke="#8e989a" stroke-width=".9" fill="none"/>
<path d="M32 82H1244" stroke="#a3adaf" stroke-width="1"/>
<path d="M1244 75.5h6.0M1244 82.6h3.5M1244 89.8h4.5M1244 96.9h3.5M1244 104.0h8.0M1244 111.1h3.5M1244 118.2h4.5M1244 125.4h3.5M1244 132.5h6.0M1244 139.6h3.5M1244 146.8h4.5M1244 153.9h3.5M1244 161.0h8.0M1244 168.1h3.5M1244 175.2h4.5M1244 182.4h3.5M1244 189.5h6.0M1244 196.6h3.5M1244 203.8h4.5M1244 210.9h3.5M1244 218.0h8.0M1244 225.1h3.5M1244 232.2h4.5M1244 239.4h3.5M1244 246.5h6.0M1244 253.6h3.5M1244 260.8h4.5M1244 267.9h3.5M1244 275.0h8.0M1244 282.1h3.5M1244 289.2h4.5M1244 296.4h3.5M1244 303.5h6.0M1244 310.6h3.5M1244 317.8h4.5M1244 324.9h3.5M1244 332.0h8.0M1244 339.1h3.5M1244 346.2h4.5M1244 353.4h3.5M1244 360.5h6.0M1244 367.6h3.5M1244 374.8h4.5M1244 381.9h3.5M1244 389.0h8.0M1244 396.1h3.5M1244 403.2h4.5M1244 410.4h3.5M1244 417.5h6.0M1244 424.6h3.5M1244 431.8h4.5M1244 438.9h3.5M1244 446.0h8.0M1244 453.1h3.5M1244 460.2h4.5M1244 467.4h3.5M1244 474.5h6.0M1244 481.6h3.5M1244 488.8h4.5M1244 495.9h3.5M1244 503.0h8.0M1244 510.1h3.5M1244 517.2h4.5M1244 524.4h3.5M1244 531.5h6.0M1244 538.6h3.5M1244 545.8h4.5M1244 552.9h3.5M1244 560.0h8.0M1244 567.1h3.5M1244 574.2h4.5M1244 581.4h3.5M1244 588.5h6.0M1244 595.6h3.5M1244 602.8h4.5M1244 609.9h3.5M1244 617.0h8.0M1244 624.1h3.5M1244 631.2h4.5" stroke="#838d8f" stroke-width="1" fill="none"/>
<path d="M1244 71.9h3.0M1244 79.1h3.0M1244 86.2h3.0M1244 93.3h3.0M1244 100.4h3.0M1244 107.6h3.0M1244 114.7h3.0M1244 121.8h3.0M1244 128.9h3.0M1244 136.1h3.0M1244 143.2h3.0M1244 150.3h3.0M1244 157.4h3.0M1244 164.6h3.0M1244 171.7h3.0M1244 178.8h3.0M1244 185.9h3.0M1244 193.1h3.0M1244 200.2h3.0M1244 207.3h3.0M1244 214.4h3.0M1244 221.6h3.0M1244 228.7h3.0M1244 235.8h3.0M1244 242.9h3.0M1244 250.1h3.0M1244 257.2h3.0M1244 264.3h3.0M1244 271.4h3.0M1244 278.6h3.0M1244 285.7h3.0M1244 292.8h3.0M1244 299.9h3.0M1244 307.1h3.0M1244 314.2h3.0M1244 321.3h3.0M1244 328.4h3.0M1244 335.6h3.0M1244 342.7h3.0M1244 349.8h3.0M1244 356.9h3.0M1244 364.1h3.0M1244 371.2h3.0M1244 378.3h3.0M1244 385.4h3.0M1244 392.6h3.0M1244 399.7h3.0M1244 406.8h3.0M1244 413.9h3.0M1244 421.1h3.0M1244 428.2h3.0M1244 435.3h3.0M1244 442.4h3.0M1244 449.6h3.0M1244 456.7h3.0M1244 463.8h3.0M1244 470.9h3.0M1244 478.1h3.0M1244 485.2h3.0M1244 492.3h3.0M1244 499.4h3.0M1244 506.6h3.0M1244 513.7h3.0M1244 520.8h3.0M1244 527.9h3.0M1244 535.1h3.0M1244 542.2h3.0M1244 549.3h3.0M1244 556.4h3.0M1244 563.6h3.0M1244 570.7h3.0M1244 577.8h3.0M1244 584.9h3.0M1244 592.1h3.0M1244 599.2h3.0M1244 606.3h3.0M1244 613.4h3.0M1244 620.6h3.0M1244 627.7h3.0M1244 634.8h3.0" stroke="#96a0a2" stroke-width=".9" fill="none"/>
<text x="98.0" y="74.800" font-size="7" fill="#70777a" font-family="Liberation Sans,sans-serif">-1</text>
<text x="214.0" y="74.800" font-size="7" fill="#70777a" font-family="Liberation Sans,sans-serif">0</text>
<text x="328.0" y="74.800" font-size="7" fill="#70777a" font-family="Liberation Sans,sans-serif">1</text>
<text x="442.0" y="74.800" font-size="7" fill="#70777a" font-family="Liberation Sans,sans-serif">2</text>
<text x="556.0" y="74.800" font-size="7" fill="#70777a" font-family="Liberation Sans,sans-serif">3</text>
<text x="670.0" y="74.800" font-size="7" fill="#70777a" font-family="Liberation Sans,sans-serif">4</text>
<text x="784.0" y="74.800" font-size="7" fill="#70777a" font-family="Liberation Sans,sans-serif">5</text>
<text x="898.0" y="74.800" font-size="7" fill="#70777a" font-family="Liberation Sans,sans-serif">6</text>
<text x="1012.0" y="74.800" font-size="7" fill="#70777a" font-family="Liberation Sans,sans-serif">7</text>
<text x="1126.0" y="74.800" font-size="7" fill="#70777a" font-family="Liberation Sans,sans-serif">8</text>
<text transform="translate(1252.5 161.5) rotate(90)" font-size="7" fill="#7f8587" font-family="Liberation Sans,sans-serif">0</text>
<text transform="translate(1252.5 275.5) rotate(90)" font-size="7" fill="#7f8587" font-family="Liberation Sans,sans-serif">1</text>
<text transform="translate(1252.5 389.5) rotate(90)" font-size="7" fill="#7f8587" font-family="Liberation Sans,sans-serif">2</text>
<text transform="translate(1252.5 503.5) rotate(90)" font-size="7" fill="#7f8587" font-family="Liberation Sans,sans-serif">3</text>
<path d="M688.500 67.500V82" stroke="#333" stroke-width="1"/>
<path d="M1244 169.200H1259" stroke="#4a4a4a" stroke-width="1.600"/>
<rect x="40.500" y="70.500" width="45" height="9" fill="#fff" stroke="#d5d8d9" stroke-width="1"/>
<text x="43" y="78" font-size="7.800" fill="#8a9292" font-family="Liberation Sans,sans-serif" textLength="40" lengthAdjust="spacing">4.165  0.070</text>
<path d="M1235.500 86.500L1241.800 98.300H1229.200Z" fill="#ffee00" stroke="#222" stroke-width="1.200" stroke-linejoin="round"/><path d="M1235.500 90v4.500" stroke="#222" stroke-width="1.300"/><circle cx="1235.500" cy="96.300" r=".8" fill="#222"/>
<rect x="32" y="67" width="6" height="571" fill="url(#ishl)"/>
<rect x="32" y="67" width="1227" height="4" fill="url(#isht)"/>
<path d="M32 638H1259" stroke="#a9babd" stroke-width="1.200"/>
</svg>
</div>
<div id="vscroll"><div class="thumb"></div>
<svg class="ch" style="top:5px;left:2.500px" width="8" height="5" viewBox="0 0 8 5"><path d="M1 4.200l3-3L7 4.200" fill="none" stroke="#555" stroke-width="1.400"/></svg>
<svg class="ch" style="bottom:3px;left:2.500px" width="8" height="5" viewBox="0 0 8 5"><path d="M1 .8l3 3L7 .8" fill="none" stroke="#444" stroke-width="1.400"/></svg>
</div>
<div id="hscroll"><div class="thumb"></div>
<svg class="ch" style="left:4px;top:2px" width="6" height="9" viewBox="0 0 6 9"><path d="M5 1L1.500 4.500 5 8" fill="none" stroke="#333" stroke-width="1.600"/></svg>
<svg class="ch" style="right:3px;top:2px" width="6" height="9" viewBox="0 0 6 9"><path d="M1 1l3.500 3.500L1 8" fill="none" stroke="#333" stroke-width="1.600"/></svg>
</div>
<div id="tabs">
<svg width="200" height="19" viewBox="0 0 200 19">
<path d="M91 19L97.500 3q.8-2 3-2h70q2 0 2.800 2L180.500 19z" fill="#93a0a2"/>
<path d="M0 19L5.500 3q.8-2 3-2H80q2 0 2.800 2L89 19z" fill="#828282"/>
<path d="M84 19L91.500 3q.8-2 3-2h70.500q2 0 2.800 2L175.500 19z" fill="#f4f5f3"/>
<circle cx="76.800" cy="9.500" r="5.300" fill="#e4e4e4"/><path d="M74.300 7l5 5M79.300 7l-5 5" stroke="#111" stroke-width="1.300"/>
<circle cx="162.500" cy="9.500" r="5.300" fill="#d0d0d0"/><path d="M160 7l5 5M165 7l-5 5" stroke="#111" stroke-width="1.300"/>
<text x="10" y="13" font-size="9.500" fill="#c9c9c9" textLength="57" lengthAdjust="spacingAndGlyphs">Untitled.studio</text>
<text x="96" y="13" font-size="9.500" fill="#5a5a5a" textLength="57" lengthAdjust="spacingAndGlyphs">Untitled.studio</text>
</svg>
</div>
<div id="panel">
<div id="ptitle">Fill Color</div>
<svg id="pclose" width="11" height="11" viewBox="0 0 11 11"><path d="M1 1l9 9M10 1l-9 9" stroke="#111" stroke-width="1.500"/></svg>
<div id="pline"></div>
<svg class="sw0" style="left:8px;top:38px" width="22" height="22" viewBox="0 0 22 22"><defs><pattern id="xh" width="7" height="7" patternUnits="userSpaceOnUse"><path d="M0 0l7 7M7 0l-7 7" stroke="#b4b4b4" stroke-width=".8" stroke-dasharray="1.500 1"/></pattern></defs><rect x=".5" y=".5" width="21" height="21" rx="4" fill="#fff"/><rect x=".5" y=".5" width="21" height="21" rx="4" fill="url(#xh)" stroke="#444" stroke-width="1"/></svg>
<svg class="sw0" style="left:32px;top:38px" width="22" height="22" viewBox="0 0 22 22"><rect x=".5" y=".5" width="21" height="21" rx="4" fill="#fff" stroke="#444" stroke-width="1"/><path d="M4.500 18.500l7.500-9" stroke="#555" stroke-width="2.600" stroke-linecap="round"/><path d="M4.500 18.500l7.500-9" stroke="#aaa" stroke-width="1.200" stroke-linecap="round"/><ellipse cx="14.500" cy="7" rx="4.300" ry="3.300" transform="rotate(-45 14.500 7)" fill="#9a9a9a" stroke="#555" stroke-width="1"/></svg>
<div class="sw" style="left:56px;top:38px;width:70px;background:#e2e2e2"></div>
<div class="sw" style="left:8px;top:62px;background:#000000"></div>
<div class="sw" style="left:32px;top:62px;background:#1c1c1c"></div>
<div class="sw" style="left:56px;top:62px;background:#383838"></div>
<div class="sw" style="left:80px;top:62px;background:#555555"></div>
<div class="sw" style="left:104px;top:62px;background:#717171"></div>
<div class="sw" style="left:8px;top:86px;background:#8d8d8d"></div>
<div class="sw" style="left:32px;top:86px;background:#aaaaaa"></div>
<div class="sw" style="left:56px;top:86px;background:#c6c6c6"></div>
<div class="sw" style="left:80px;top:86px;background:#e2e2e2"></div>
<div class="sw" style="left:104px;top:86px;background:#ffffff"></div>
<div class="sw" style="left:8px;top:110px;background:#f20000"></div>
<div class="sw" style="left:32px;top:110px;background:#ff3030"></div>
<div class="sw" style="left:56px;top:110px;background:#ff6262"></div>
<div class="sw" style="left:80px;top:110px;background:#ff9595"></div>
<div class="sw" style="left:104px;top:110px;background:#ffcaca"></div>
<div class="sw" style="left:8px;top:134px;background:#75462a"></div>
<div class="sw" style="left:32px;top:134px;background:#875633"></div>
<div class="sw" style="left:56px;top:134px;background:#c49c6c"></div>
<div class="sw" style="left:80px;top:134px;background:#d8b88e"></div>
<div class="sw" style="left:104px;top:134px;background:#e5d3b3"></div>
<div class="sw" style="left:8px;top:158px;background:#f56a0a"></div>
<div class="sw" style="left:32px;top:158px;background:#ff7d1a"></div>
<div class="sw" style="left:56px;top:158px;background:#ff8e3c"></div>
<div class="sw" style="left:80px;top:158px;background:#ffa05a"></div>
<div class="sw" style="left:104px;top:158px;background:#ffad70"></div>
<div class="sw" style="left:8px;top:182px;background:#ffa60a"></div>
<div class="sw" style="left:32px;top:182px;background:#ffb833"></div>
<div class="sw" style="left:56px;top:182px;background:#ffc85c"></div>
<div class="sw" style="left:80px;top:182px;background:#ffdc99"></div>
<div class="sw" style="left:104px;top:182px;background:#ffecc8"></div>
<div class="sw" style="left:8px;top:206px;background:#aeaa0a"></div>
<div class="sw" style="left:32px;top:206px;background:#c8c40a"></div>
<div class="sw" style="left:56px;top:206px;background:#dcd80a"></div>
<div class="sw" style="left:80px;top:206px;background:#eee80a"></div>
<div class="sw" style="left:104px;top:206px;background:#fffa0a"></div>
<div class="sw" style="left:8px;top:230px;background:#8cc00a"></div>
<div class="sw" style="left:32px;top:230px;background:#98cc0a"></div>
<div class="sw" style="left:56px;top:230px;background:#a4d80a"></div>
<div class="sw" style="left:80px;top:230px;background:#b0e40a"></div>
<div class="sw" style="left:104px;top:230px;background:#bcf00a"></div>
<div class="sw" style="left:8px;top:254px;background:#3cc00a"></div>
<div class="sw" style="left:32px;top:254px;background:#44cc0a"></div>
<div class="sw" style="left:56px;top:254px;background:#4cd80a"></div>
<div class="sw" style="left:80px;top:254px;background:#54e40a"></div>
<div class="sw" style="left:104px;top:254px;background:#5cf00a"></div>
<div class="sw" style="left:8px;top:278px;background:#0ae87a"></div>
<div class="sw" style="left:32px;top:278px;background:#3cf598"></div>
<div class="sw" style="left:56px;top:278px;background:#7cfab8"></div>
<div class="sw" style="left:80px;top:278px;background:#b0fcd6"></div>
<div class="sw" style="left:104px;top:278px;background:#e0fff0"></div>
<div class="sw" style="left:8px;top:302px;background:#0ae8c8"></div>
<div class="sw" style="left:32px;top:302px;background:#3cf5d8"></div>
<div class="sw" style="left:56px;top:302px;background:#7cfae6"></div>
<div class="sw" style="left:80px;top:302px;background:#b0fcf0"></div>
<div class="sw" style="left:104px;top:302px;background:#e0fffa"></div>
<div class="sw" style="left:8px;top:326px;background:#0cc6fa"></div>
<div class="sw" style="left:32px;top:326px;background:#30d2fc"></div>
<div class="sw" style="left:56px;top:326px;background:#5cdcfc"></div>
<div class="sw" style="left:80px;top:326px;background:#86e6fd"></div>
<div class="sw" style="left:104px;top:326px;background:#a8effe"></div>
<div class="sw" style="left:8px;top:350px;background:#106cf8"></div>
<div class="sw" style="left:32px;top:350px;background:#408efa"></div>
<div class="sw" style="left:56px;top:350px;background:#74aefa"></div>
<div class="sw" style="left:80px;top:350px;background:#a8ccfc"></div>
<div class="sw" style="left:104px;top:350px;background:#d8e8fe"></div>
<div class="sw" style="left:8px;top:374px;background:#0a0afc"></div>
<div class="sw" style="left:32px;top:374px;background:#3c3cf8"></div>
<div class="sw" style="left:56px;top:374px;background:#7070fa"></div>
<div class="sw" style="left:80px;top:374px;background:#a0a0fc"></div>
<div class="sw" style="left:104px;top:374px;background:#d0d0fd"></div>
<div class="sw" style="left:8px;top:398px;background:#6e16fc"></div>
<div class="sw" style="left:32px;top:398px;background:#9050fa"></div>
<div class="sw" style="left:56px;top:398px;background:#b080fa"></div>
<div class="sw" style="left:80px;top:398px;background:#cca8fc"></div>
<div class="sw" style="left:104px;top:398px;background:#e8dcfe"></div>
<div class="sw" style="left:8px;top:422px;background:#d41efc"></div>
<div class="sw" style="left:32px;top:422px;background:#e056fd"></div>
<div class="sw" style="left:56px;top:422px;background:#e88cfc"></div>
<div class="sw" style="left:80px;top:422px;background:#f0b6fc"></div>
<div class="sw" style="left:104px;top:422px;background:#f8e2fe"></div>
<div class="sw" style="left:8px;top:446px;background:#fc24cc"></div>
<div class="sw" style="left:32px;top:446px;background:#fc56d6"></div>
<div class="sw" style="left:56px;top:446px;background:#fc86e0"></div>
<div class="sw" style="left:80px;top:446px;background:#fcb2ec"></div>
<div class="sw" style="left:104px;top:446px;background:#fee0f6"></div>
<div class="sw" style="left:8px;top:470px;background:#f8246f;border:2px solid #444;border-radius:3px"></div>
<div class="sw" style="left:32px;top:470px;background:#fa4a8a"></div>
<div class="sw" style="left:56px;top:470px;background:#fb72a2"></div>
<div class="sw" style="left:80px;top:470px;background:#fc9abb"></div>
<div class="sw" style="left:104px;top:470px;background:#febed3"></div>
<div id="pscroll"><svg class="ch" style="top:5px;left:2px" width="8" height="5" viewBox="0 0 8 5"><path d="M.5 4.500L4 1l3.500 3.500" fill="none" stroke="#b4b4b4" stroke-width="1.200"/></svg><svg class="ch" style="bottom:6px;left:2px" width="8" height="5" viewBox="0 0 8 5"><path d="M.5.500L4 4l3.500-3.500" fill="none" stroke="#aaa" stroke-width="1.200"/></svg></div>
<div id="advopt">Advanced Options</div>
</div>
<svg id="wheel" width="16" height="16" viewBox="0 0 16 16"><defs><radialGradient id="wg" r="50%"><stop offset="0" stop-color="#fff"/><stop offset=".45" stop-color="#fff" stop-opacity=".7"/><stop offset="1" stop-color="#fff" stop-opacity="0"/></radialGradient></defs>
<circle cx="8" cy="8" r="7.600" fill="#e8eef0"/>
<g transform="translate(8 8)"><path d="M0 0L0-6.500A6.500 6.500 0 0 1 5.630-3.250z" fill="#f5d800"/><path d="M0 0L5.630-3.250A6.500 6.500 0 0 1 5.630 3.250z" fill="#e01010"/><path d="M0 0L5.630 3.250A6.500 6.500 0 0 1 0 6.500z" fill="#c010c0"/><path d="M0 0L0 6.500A6.500 6.500 0 0 1-5.630 3.250z" fill="#2020e0"/><path d="M0 0L-5.630 3.250A6.500 6.500 0 0 1-5.630-3.250z" fill="#10b0d0"/><path d="M0 0L-5.630-3.250A6.500 6.500 0 0 1 0-6.500z" fill="#30c020"/><circle r="6.500" fill="url(#wg)"/></g></svg>
<div id="wm1">Occasionally Crafty</div>
<div id="wm2">www.occasionallycrafty.com</div>
</div>
</div>
</body></html>
